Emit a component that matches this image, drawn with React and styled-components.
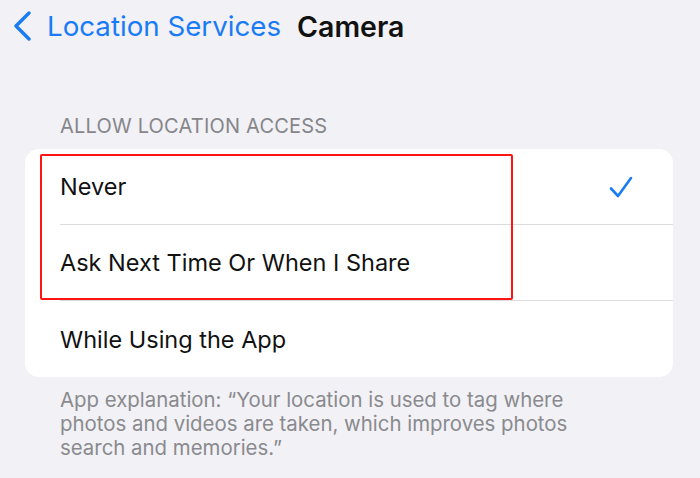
import React from "react";
import styled, { createGlobalStyle } from "styled-components";

const GlobalStyle = createGlobalStyle`
  body {
    margin: 0;
    background: #f1f1f6;
    font-family: Inter, "Noto Sans", sans-serif;
  }
`;

const Page = styled.div`
  width: 700px;
  height: 478px;
  background: #f1f1f6;
  overflow: hidden;
`;

const NavBar = styled.div`
  display: flex;
  align-items: center;
  height: 52px;
  padding-left: 12px;
`;

const Back = styled.div`
  display: flex;
  align-items: center;
  gap: 15px;
  color: #1a7cf5;
  font-size: 27.7px;
`;

const Title = styled.div`
  margin-left: 16px;
  font-size: 28.5px;
  font-weight: 600;
  color: #111;
`;

const Section = styled.div`
  padding: 62px 27px 0 25px;
`;

const SectionHeader = styled.div`
  padding-left: 35px;
  font-size: 20px;
  color: #86868a;
  letter-spacing: 0.2px;
  margin-bottom: 11px;
`;

const Card = styled.div`
  position: relative;
  background: #fff;
  border-radius: 14px;
`;

const Row = styled.div`
  display: flex;
  align-items: center;
  justify-content: space-between;
  box-sizing: border-box;
  height: 76px;
  margin-left: 35px;
  padding: 0 40px 0 0;
  font-size: 23.5px;
  color: #111;
  border-bottom: ${(p) => (p.last ? "none" : "1px solid #dcdce0")};
`;

const Highlight = styled.div`
  position: absolute;
  left: 15px;
  top: 5px;
  width: 469px;
  height: 142px;
  border: 2px solid #ff1414;
  border-radius: 2px;
`;

const Footer = styled.div`
  padding: 11px 0 0 35px;
  width: 530px;
  font-size: 20.4px;
  line-height: 24px;
  color: #8a8a8e;
`;

const Check = () => (
  <svg width="24" height="22" viewBox="0 0 24 22">
    <path d="M2 12.5 L9 20 L22 2" fill="none" stroke="#1a7cf5" strokeWidth="2.6" strokeLinecap="round" strokeLinejoin="round" />
  </svg>
);

const Chevron = () => (
  <svg width="20" height="30" viewBox="0 0 20 30">
    <path d="M17 2 L4 15 L17 28" fill="none" stroke="#1a7cf5" strokeWidth="3.4" strokeLinecap="round" strokeLinejoin="round" />
  </svg>
);

const options = [
  { label: "Never", checked: true },
  { label: "Ask Next Time Or When I Share" },
  { label: "While Using the App" },
];

export default function App() {
  return (
    <Page>
      <GlobalStyle />
      <NavBar>
        <Back>
          <Chevron />
          <span>Location Services</span>
        </Back>
        <Title>Camera</Title>
      </NavBar>
      <Section>
        <SectionHeader>ALLOW LOCATION ACCESS</SectionHeader>
        <Card>
          {options.map((o, i) => (
            <Row key={o.label} last={i === options.length - 1}>
              <span>{o.label}</span>
              {o.checked && <Check />}
            </Row>
          ))}
          <Highlight />
        </Card>
        <Footer>
          App explanation: “Your location is used to tag where photos and videos are taken, which improves photos search and memories.”
        </Footer>
      </Section>
    </Page>
  );
}
